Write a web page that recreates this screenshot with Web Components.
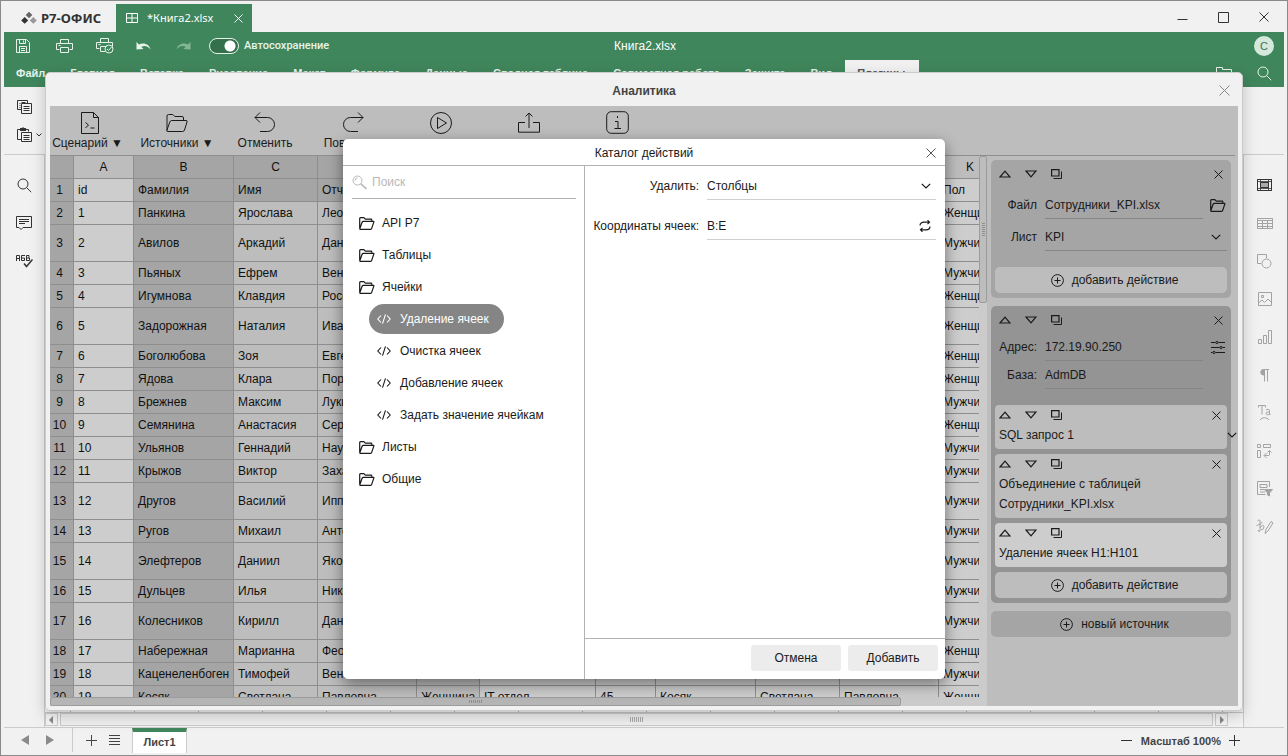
<!DOCTYPE html>
<html lang="ru">
<head>
<meta charset="utf-8">
<title>Р7-Офис — Книга2.xlsx</title>
<style>
html, body { margin: 0; height: 100%; overflow: hidden; }
body { font: 12px/16px "Liberation Sans", Arial, sans-serif; color: #1a1a1a; background: #f1f1f1; }
</style>
</head>
<body>
<office-window></office-window>
<script>
const RESET = `
*, *::before, *::after { box-sizing: border-box; }
button, input, select { font: inherit; color: inherit; background: none; border: 0; border-radius: 0; margin: 0; padding: 0; outline: 0; appearance: none; }
button { display: inline-flex; align-items: center; justify-content: center; }
`;
function define(name, css, html, setup) {
  customElements.define(name, class extends HTMLElement {
    connectedCallback() {
      if (this.shadowRoot) return;
      const root = this.attachShadow({ mode: 'open' });
      const body = typeof html === 'function' ? html(this) : html;
      root.innerHTML = `<style>${RESET}${css}</style>${body}`;
      if (setup) setup(root, this);
    }
  });
}

/* name: [width, height, markup] */
const ICONS = {
  logo: [16, 14, '<g stroke="none"><path fill="#666" d="M8 .8l3.300 3.200L8 7.200 4.700 4z"/><path fill="#333" d="M3.700 6l3.500 3.400-3.500 3.400L.2 9.400z"/><path fill="#999" d="M12.300 6l3.500 3.400-3.500 3.400-3.500-3.400z"/></g>'],
  grid: [12, 10, '<path d="M.5.5h11v9H.5zM6 .5v9M.5 5h11"/>'],
  x9: [9, 9, '<path d="M.5.5l8 8M8.500.5l-8 8"/>'],
  x10: [10, 10, '<path d="M.5.5l9 9M9.500.5l-9 9"/>'],
  x11: [11, 11, '<path d="M.5.5l10 10M10.500.5l-10 10"/>'],
  min: [11, 11, '<path d="M.5 7.500h10"/>'],
  dash: [11, 11, '<path d="M0 5.500h11"/>'],
  max: [11, 11, '<path d="M.5.5h10v10H.5z"/>'],
  save: [14, 14, '<path d="M.5.5h10l3 3v10H.5zM3.500.5v4h6v-4M7.500 1.500v2M3.500 13.500v-6h7v6M5 9.500h4M5 11.500h4"/>'],
  print: [17, 14, '<path d="M4.500 4.500v-4h8v4M3.500 10.500h-3v-6h16v6h-3M4.500 8.500h8v5h-8zM2.500 6.500h2"/>'],
  printok: [18, 16, '<path d="M4.500 4.500v-4h8v4M3.500 10.500h-3v-6h16v4M9 13.500H4.500v-5h6M2.500 6.500h2"/><circle cx="13" cy="11" r="4"/><path d="M11 11l1.500 1.500L15.500 9"/>'],
  undo: [15, 10, '<path stroke="none" fill="currentColor" d="M.5 1v7.500l7-.5-2.300-2.300C9 4 12 5 14.500 8.500 13.500 3.500 8 1 3 3.500z"/>'],
  redo: [15, 10, '<path stroke="none" fill="currentColor" d="M14.500 1v7.500l-7-.5 2.300-2.300C6 4 3 5 .5 8.500 1.500 3.500 7 1 12 3.500z"/>'],
  search: [15, 15, '<circle cx="6" cy="6" r="5"/><path d="M9.700 9.700l4.500 4.500"/>'],
  lens: [16, 15, '<circle cx="5.500" cy="5.500" r="4.500"/><path d="M3 5.500A2.500 2.500 0 0 1 5.500 3"/><path stroke-width="1.600" d="M8.800 8.800l5.700 5"/>'],
  folderline: [17, 13, '<path d="M.5 12.500V.5h6v2h9v10"/>'],
  copy: [15, 14, '<path d="M4.500 9.500h-4v-9h10v3M2.500 3.500h1M2.500 5.500h1M2.500 7.500h1M4.500 2.500h4M4.500 3.500h10v10h-10zM6.500 6.500h6M6.500 8.500h6M6.500 10.500h6"/>'],
  paste: [15, 15, '<path d="M4.500 12.500h-4v-10h3M9 2.500h2.500v2M4.500 5.500h10v9h-10zM6.500 8.500h6M6.500 10.500h6M6.500 12.500h6"/><path fill="currentColor" stroke="none" d="M3 1h2l1-1 1 1h2v3H3z"/>'],
  chev: [10, 6, '<path stroke-width="1.200" d="M.8.8L5 5 9.200.8"/>'],
  chevs: [6, 4, '<path d="M.5.5L3 3 5.500.5"/>'],
  comment: [16, 14, '<path d="M.5.5h15v11H7l-2 2-2-2H.5zM3 3.500h10M3 5.500h10M3 7.500h6"/>'],
  spell: [17, 14, '<path d="M.5 7V1.500h3V7M.5 4.500h3M5.500 6.500V1.500H9M5.500 4h3v2.500h-3M10.500 1.500h2.500V4h-2.500v2.500h3V4M10.500 1.500v5"/><path stroke-width="1.500" d="M8 9.500l2.500 3 6-7"/>'],
  cells: [15, 12, '<path d="M.5.5h14v11H.5zM3.500.5v11M11.500.5v11M.5 2.500h14M.5 9.500h14" stroke-width=".8"/><path d="M.5.5h14v11H.5z"/><path fill="#aaa" d="M3.500 3.500h8v5h-8z"/>'],
  table: [16, 11, '<path d="M.5.5h15v10H.5zM.5 2.500h15M.5 5.500h15M.5 8.500h15M5.500 2.500v8M10.500 2.500v8"/>'],
  shape: [15, 15, '<path d="M4 9.500H.5v-9h9V4"/><circle cx="9.500" cy="9.500" r="4.500"/>'],
  image: [14, 14, '<path d="M.5.5h13v13H.5zM.5 11L4 8l2.500 2.500L10 7l3.500 3.500M3.500 3.500h2v2h-2z"/>'],
  chart: [14, 14, '<path d="M.5 9.500h3v4h-3zM5.500 5.500h3v8h-3zM10.500.5h3v13h-3z"/>'],
  para: [9, 13, '<path d="M4.500 0v12.500M7.500 0v12.500M4 .5h5"/><path fill="currentColor" d="M4.500.5h-1a2.700 2.700 0 0 0 0 5.500h1z"/>'],
  art: [13, 16, '<path d="M.5 2.500v-2h7v2M4 .5v9M8 5c1-1 3.500-1 3.500.5v4c-1.500.5-3.500.3-3.500-1.200S10 7 11.500 7M11.500 9l1 .5M2 15c2-3 7-3 9 0"/>'],
  pivot: [15, 14, '<path d="M.5.5h3v3h-3zM6.500.5h7v3h-7zM.5 6.500h3v7h-3zM7.500 11.500h4c1 0 1-.5 1-1V7M9.500 9l-2.500 2.500L9.500 14M10.500 8.500l2-2 2 2"/>'],
  filter: [16, 16, '<path d="M12.500 6V.5H.5v13h8M3 3.500h7v3H3zM3 8.500h4M3 11h5"/><path fill="currentColor" d="M7.500 8.500h8L12.500 12v3l-2-1v-2z"/>'],
  sign: [18, 16, '<path d="M1.500 2q3-3 2.500 2v8q-1 2-2-1M.5 6.500q4-1 6-3.500M4 9q3-5 4-1-.5 3-3 3M9 14.500l1-4 5-8 2 1.500-5 8z"/>'],
  script: [18, 22, '<path d="M.5.5h12l5 5v16H.5zM12.500.5v5h5M4.500 10.500L7.500 13l-3 3M9.500 16h4"/>'],
  open: [22, 18, '<path d="M1 16.500V2q0-1.500 1.500-1.500h4.300l2 2H16q1.500 0 1.500 1.500v2.500M.8 16.500l3-8.500q.5-1.500 2-1.500H20q1.500 0 1 1.500l-2.500 8q-.4 1.500-2 1.500H1.800q-1.300 0-1-1z"/>'],
  back: [22, 21, '<path d="M6 .5L1 5.500l5 5M1 5.500h12.500a7 7 0 0 1 0 14H6"/>'],
  forward: [22, 21, '<path d="M16 .5l5 5-5 5M21 5.500H8.500a7 7 0 0 0 0 14H16"/>'],
  play: [24, 24, '<circle cx="12" cy="12" r="10.500"/><path d="M8.500 6.500l9 5.500-9 5.500z"/>'],
  share: [22, 21, '<path d="M11 16V1M7.500 4.500L11 1l3.500 3.500M7 10.500H.5v9.700h21v-9.700H15"/>'],
  info: [23, 23, '<rect x=".7" y=".7" width="21.600" height="21.600" rx="4.500"/><path d="M11.500 5v2M9 10.500h3v7M8.500 17.500h6.500"/>'],
  up: [12, 8, '<path stroke-width="1.200" d="M1 7l5-5.800L11 7z"/>'],
  down: [12, 8, '<path stroke-width="1.200" d="M1 1l5 5.800L11 1z"/>'],
  dup: [11, 10, '<path stroke-width="1.200" d="M.6.6h7.400v6.400H.6z"/><path d="M10.500 2.500v7H2.500"/>'],
  folder: [16, 13, '<path stroke-width="1.200" d="M.7 11.500V1.500q0-.8.8-.8h3.300l1.500 1.500H12q.8 0 .8.8v1.300M.8 11.800l2.300-6.600q.3-.9 1.200-.9h10.200q.6 0 .3.800l-2.200 6.500q-.2.700-1 .7H1.300q-.7 0-.5-.5z"/>'],
  code: [14, 10, '<path stroke-width="1.100" d="M4 1.500L.8 5 4 8.500M10 1.500L13.200 5 10 8.500M8.500.3l-3 9.400"/>'],
  plus: [13, 13, '<circle cx="6.500" cy="6.500" r="5.900"/><path d="M6.500 3.500v6M3.500 6.500h6"/>'],
  cross: [11, 11, '<path d="M5.500 0v11M0 5.500h11"/>'],
  list: [11, 11, '<path d="M0 .5h11M0 3.500h11M0 6.500h11M0 9.500h11"/>'],
  sliders: [14, 13, '<path stroke-width="1.100" d="M0 1.500h4.500M7.500 1.500H14M0 6.500h8.500M11.500 6.500H14M0 11.500h1.500M4.500 11.500H14"/><circle cx="6" cy="1.500" r="1.100"/><circle cx="10" cy="6.500" r="1.100"/><circle cx="3" cy="11.500" r="1.100"/>'],
  sync: [12, 12, '<path stroke-width="1.200" d="M1 5.500C1 3 3 2.200 5 2.200h5.500M8.500.2l2 2-2 2M11 6.500c0 2.500-2 3.300-4 3.300H1.500M3.500 7.800l-2 2 2 2"/>'],
  tl: [8, 10, '<path stroke="none" fill="currentColor" d="M8 0v10L0 5z"/>'],
  tr: [8, 10, '<path stroke="none" fill="currentColor" d="M0 0v10l8-5z"/>'],
  tls: [5, 8, '<path stroke="none" fill="currentColor" d="M4 0v8L0 4z"/>'],
  trs: [5, 8, '<path stroke="none" fill="currentColor" d="M1 0v8l4-4z"/>'],
};
const icon = n => `<ui-icon name="${n}"></ui-icon>`;
define('ui-icon', `:host { display: inline-flex; flex: none; } svg { display: block; fill: none; stroke: currentColor; }`,
  el => { const [w, h, m] = ICONS[el.getAttribute('name')]; return `<svg width="${w}" height="${h}" viewBox="0 0 ${w} ${h}" aria-hidden="true">${m}</svg>`; });

define('title-bar', `
:host { display: flex; height: 31px; padding: 3px 13px 0 20px; color: #333; }
.brand { display: flex; align-items: center; gap: 4px; width: 95px; font: bold 13px/20px "Noto Sans", sans-serif; }
.tab { display: flex; align-items: center; width: 136px; padding: 0 9px 0 10px; background: #40865c; color: #fff; font: 11px/16px "Noto Sans", sans-serif; }
.tab span { flex: 1; padding-left: 9px; }
.win { margin-left: auto; display: flex; gap: 30px; padding: 0 5px 2px 0; }`,
`<div class="brand">${icon('logo')}<span>Р7-ОФИС</span></div>
<div class="tab">${icon('grid')}<span>*Книга2.xlsx</span><button aria-label="Закрыть вкладку">${icon('x9')}</button></div>
<div class="win"><button aria-label="Свернуть">${icon('min')}</button><button aria-label="Развернуть">${icon('max')}</button><button aria-label="Закрыть">${icon('x10')}</button></div>`);

define('app-header', `
:host { display: grid; grid-template-rows: 28px 27px; height: 55px; margin: 0 3px; background: #40865c; color: #e6f3ea; }
.quick { display: grid; grid-template-columns: 1fr auto 1fr; align-items: center; padding: 0 10px 0 12px; }
.left { display: flex; align-items: center; }
.left button { width: 40px; justify-content: flex-start; }
.left .dim { color: #83b596; width: 33px; }
label { display: flex; align-items: center; gap: 5px; font: 500 11px/14px Roboto, "Liberation Sans", sans-serif; }
label input { width: 30px; height: 16px; border: 1px solid #e6f3ea; border-radius: 8px; background: radial-gradient(circle at 20px 7px, #fff 5px, #33704b 6px); }
.user { justify-self: end; width: 20px; height: 20px; border-radius: 10px; background: #d5e8dc; color: #40705a; font-size: 11px; }
nav { display: flex; font: bold 11px/14px "Liberation Sans", Arial, sans-serif; }
nav a { padding: 6px 13px 6px 12px; color: inherit; text-decoration: none; }
nav a.on { background: #f1f1f1; color: #555; }
.tools { margin-left: auto; display: flex; align-items: center; gap: 24px; padding-right: 12px; }
.doc { color: #fff; }`,
`<div class="quick"><div class="left">
<button aria-label="Сохранить">${icon('save')}</button><button aria-label="Печать">${icon('print')}</button><button aria-label="Быстрая печать">${icon('printok')}</button><button aria-label="Отменить">${icon('undo')}</button><button class="dim" aria-label="Повторить">${icon('redo')}</button>
<label><input type="checkbox" checked>Автосохранение</label></div>
<span class="doc">Книга2.xlsx</span><button class="user">C</button></div>
<nav>${['Файл','Главная','Вставка','Рисование','Макет','Формула','Данные','Сводная таблица','Совместная работа','Защита','Вид'].map(t => `<a href="#">${t}</a>`).join('')}<a href="#" class="on">Плагины</a>
<div class="tools"><button aria-label="Открыть расположение">${icon('folderline')}</button><button aria-label="Поиск">${icon('search')}</button></div></nav>`);

define('side-rail', `
:host { display: flex; flex-direction: column; width: 41px; color: #333; }
.top { display: flex; flex-direction: column; height: 68px; border-bottom: 1px solid #cbcbcb; align-items: flex-start; padding: 13px 0 0 13px; gap: 13px; }
.top div { display: flex; align-items: center; gap: 4px; }
.list { flex: 1; display: flex; flex-direction: column; align-items: center; padding-top: 11px; }
.list button { height: 38px; width: 38px; }
:host([side=left]) .list { border-right: 1px solid #cbcbcb; }
:host([side=right]) .list { border-left: 1px solid #cbcbcb; color: #a3a3a3; padding-left: 1px; }
:host([side=right]) .list button:first-child { color: #333; }`,
el => el.getAttribute('side') === 'left'
 ? `<div class="top"><button aria-label="Копировать">${icon('copy')}</button><div><button aria-label="Вставить">${icon('paste')}</button>${icon('chevs')}</div></div><div class="list">${['search','comment','spell'].map(n => `<button aria-label="${n}">${icon(n)}</button>`).join('')}</div>`
 : `<div class="top"></div><div class="list">${['cells','table','shape','image','chart','para','art','pivot','filter','sign'].map(n => `<button aria-label="${n}">${icon(n)}</button>`).join('')}</div>`);

define('work-area', `
:host { flex: 1; display: flex; flex-direction: column; justify-content: flex-end; }
.ticks { height: 2px; background: repeating-linear-gradient(90deg, transparent 0 25px, #aaa 25px 26px, transparent 26px 64px); border-bottom: 1px solid #c5c5c5; }
.bar { display: flex; gap: 2px; height: 14px; padding: 0 15px 1px 0; background: #f4f4f4; color: #888; }
.bar button { width: 13px; border: 1px solid #cbcbcb; }
.track { flex: 1; display: grid; place-items: center; border: 1px solid #cbcbcb; background: #f0f0f0; }
.grip { width: 13px; height: 5px; background: repeating-linear-gradient(90deg, #aaa 0 1px, transparent 1px 2px); }`,
`<div class="ticks"></div><div class="bar"><button aria-label="Влево">${icon('tls')}</button><div class="track"><i class="grip"></i></div><button aria-label="Вправо">${icon('trs')}</button></div>`);

define('status-bar', `
:host { display: flex; align-items: stretch; height: 28px; margin: 0 3px; border-top: 1px solid #cbcbcb; font: bold 11px/14px "Liberation Sans", Arial, sans-serif; color: #444; }
.nav { display: flex; align-items: center; gap: 17px; width: 69px; padding: 0 0 0 17px; margin-bottom: 3px; border-right: 1px solid #cbcbcb; color: #8a8a8a; }
.ops { display: flex; gap: 12px; align-items: center; padding: 0 12px 2px 13px; }
.sheet { width: 55px; height: 25px; background: #fff; border: 1px solid #cbcbcb; border-top: 4px solid #40865c; border-bottom: 0; padding-bottom: 2px; }
.zoom { margin-left: auto; display: flex; align-items: center; gap: 8px; padding: 0 44px 2px 0; }
.zoom button:first-child { margin-right: 1px; }
.zoom ui-icon { color: #333; }`,
`<div class="nav"><button aria-label="Предыдущий лист">${icon('tl')}</button><button aria-label="Следующий лист">${icon('tr')}</button></div>
<div class="ops"><button aria-label="Добавить лист">${icon('cross')}</button><button aria-label="Список листов">${icon('list')}</button></div>
<button class="sheet">Лист1</button>
<div class="zoom"><button aria-label="Уменьшить">${icon('dash')}</button><span>Масштаб 100%</span><button aria-label="Увеличить">${icon('cross')}</button></div>`);

const ROWS = [
 ['id','Фамилия','Имя','Отчество','Пол'],
 ['1','Панкина','Ярослава','Леонидовна','Женщина'],
 ['2','Авилов','Аркадий','Данилович','Мужчина',1],
 ['3','Пьяных','Ефрем','Венедиктыч','Мужчина'],
 ['4','Игумнова','Клавдия','Росселевна','Женщина'],
 ['5','Задорожная','Наталия','Ивановна','Женщина',1],
 ['6','Боголюбова','Зоя','Евгеньевна','Женщина'],
 ['7','Ядова','Клара','Порфирьевна','Женщина'],
 ['8','Брежнев','Максим','Лукич','Мужчина'],
 ['9','Семянина','Анастасия','Сергеевна','Женщина'],
 ['10','Ульянов','Геннадий','Наумович','Мужчина'],
 ['11','Крыжов','Виктор','Захарович','Мужчина'],
 ['12','Другов','Василий','Ипполитович','Мужчина',1],
 ['13','Ругов','Михаил','Антонович','Мужчина'],
 ['14','Элефтеров','Даниил','Яковлевич','Мужчина',1],
 ['15','Дульцев','Илья','Никитич','Мужчина'],
 ['16','Колесников','Кирилл','Данилович','Мужчина',1],
 ['17','Набережная','Марианна','Феоктистовна','Женщина'],
 ['18','Каценеленбоген','Тимофей','Вениаминович','Мужчина'],
 ['19','Косяк','Светлана','Павловна','Женщина'],
];
const TAIL = { 19: ['Женщина','IT отдел','45','Косяк','Светлана','Павловна'] };
define('data-sheet', `
:host { display: grid; grid-template: minmax(0, 1fr) 9px / minmax(0, 1fr) 8px; background: #cbcbcb; color: #111; }
.view { overflow: hidden; }
table { table-layout: fixed; width: 952px; border-spacing: 0; }
th, td { height: 23px; padding: 0 0 0 4px; border: solid #8e8e8e; border-width: 0 1px 1px 0; text-align: left; white-space: nowrap; overflow: hidden; font-weight: normal; line-height: 16px; background: #cdcdcd; }
.tall td, .tall th { height: 37px; }
thead th { padding: 0; text-align: center; background: #bdbdbd; }
tbody th { padding: 0 4px 0 0; text-align: center; background: #a5a5a5; }
.s { background: #bdbdbd; }
.b, thead .s, tbody .first .s { background: #a5a5a5; }
.thumb { height: 147px; display: grid; place-items: center; border: 1px solid #9c9c9c; border-radius: 2px; background: #bdbdbd; }
.thumb i { width: 3px; height: 13px; background: repeating-linear-gradient(#8e8e8e 0 1px, transparent 1px 2px); }
.hthumb { width: 851px; display: grid; place-items: center; border: 1px solid #9c9c9c; border-radius: 2px; background: #b5b5b5; max-width: 92%; }
.hthumb i { width: 13px; height: 3px; background: repeating-linear-gradient(90deg, #8e8e8e 0 1px, transparent 1px 2px); }`,
() => {
  const cls = ['', 'b', 's', 's', 's', '', '', '', '', '', ''];
  const head = 'ABCDEFGHIJK'.split('').map((c, i) => `<th scope="col" class="${cls[i]}">${c}</th>`).join('');
  const body = ROWS.map((r, i) => {
    const cells = [...r.slice(0, 4), ...(TAIL[i] || ['', '', '', '', '', '']), r[4]];
    return `<tr class="${r[5] ? 'tall' : ''} ${i ? '' : 'first'}"><th scope="row">${i + 1}</th>${cells.map((c, j) => `<td class="${cls[j]}">${c}</td>`).join('')}</tr>`;
  }).join('');
  const cols = [24, 60, 100, 84, 99, 63, 116, 60, 100, 84, 99, 63].map(w => `<col style="width:${w}px">`).join('');
  return `<div class="view"><table><colgroup>${cols}</colgroup><thead><tr><th class="b"></th>${head}</tr></thead><tbody>${body}</tbody></table></div><div><div class="thumb"><i></i></div></div><div class="hthumb"><i></i></div>`;
});

const TOOLROW = `<div class="tools"><button aria-label="Выше">${icon('up')}</button><button aria-label="Ниже">${icon('down')}</button><button aria-label="Дублировать">${icon('dup')}</button><button class="close" aria-label="Удалить">${icon('x9')}</button></div>`;
const TOOLCSS = `.tools { display: flex; align-items: center; gap: 14px; height: 20px; } .tools .close { margin-left: auto; }`;

define('source-card', `
:host { display: flex; flex-direction: column; gap: 5px; padding: 4px 4px 5px; border-radius: 5px; background: var(--card, #a5a5a5); }
${TOOLCSS} .tools { padding: 0 4px; }`, `${TOOLROW}<slot></slot>`);

define('card-field', `
:host { display: flex; align-items: center; height: var(--h, 28px); }
label { width: 42px; text-align: right; margin-right: 8px; }
.box { flex: 1; display: flex; align-items: center; justify-content: space-between; height: 28px; border-bottom: 1px solid #858585; }
:host([action]) .box { margin-right: 7px; }
input, select { flex: 1; min-width: 0; height: 26px; }
button, .ph { width: 16px; margin-right: 1px; }
.chev { margin-right: 6px; display: flex; }`,
el => {
  const k = el.getAttribute('kind'), a = el.getAttribute('action'), v = el.getAttribute('value'), l = el.getAttribute('label');
  const field = k === 'select' ? `<select id="f"><option>${v}</option></select><span class="chev">${icon('chev')}</span>` : `<input id="f" type="text" value="${v}">`;
  const act = a === null ? '' : a ? `<button aria-label="Изменить">${icon(a)}</button>` : '<span class="ph"></span>';
  return `<label for="f">${l}</label><div class="box">${field}</div>${act}`;
});

define('action-item', `
:host { display: block; padding: 0 6px 4px 4px; border-radius: 4px; background: var(--item, #bdbdbd); line-height: 20px; }
${TOOLCSS}`, `${TOOLROW}<slot></slot>`);

define('add-button', `
:host { display: block; }
button { width: 100%; height: 26px; padding-left: 7px; gap: 8px; border-radius: 5px; background: var(--fill, #bdbdbd); }`,
`<button>${icon('plus')}<slot></slot></button>`);

define('source-panel', `
:host { display: flex; flex-direction: column; gap: 8px; width: 251px; padding: 4px 7px 0 4px; background: #bdbdbd; position: relative; }
.two { --card: #949494; }
.fields { display: flex; flex-direction: column; }
.one card-field { --h: 32px; }
.one add-button { margin-top: 9px; }
.two .fields { margin: -2px 0 11px; }
.last { --item: #cdcdcd; }
.new { --fill: #a5a5a5; }
.more { position: absolute; left: 240px; top: 276px; }`,
`<source-card class="one"><div class="fields"><card-field label="Файл" value="Сотрудники_KPI.xlsx" action="folder"></card-field><card-field label="Лист" value="KPI" kind="select"></card-field></div><add-button>добавить действие</add-button></source-card>
<source-card class="two"><div class="fields"><card-field label="Адрес:" value="172.19.90.250" action="sliders"></card-field><card-field label="База:" value="AdmDB" action=""></card-field></div>
<action-item>SQL запрос 1</action-item><action-item>Объединение с таблицей<br>Сотрудники_KPI.xlsx</action-item><action-item class="last">Удаление ячеек H1:H101</action-item><add-button>добавить действие</add-button></source-card>
<add-button class="new">новый источник</add-button><button class="more" aria-label="Ещё">${icon('chev')}</button>`);

define('catalog-entry', `
:host { display: block; height: 32px; padding: 1px 0; }
button { height: 30px; gap: 7px; padding: 0 15px 0 8px; border-radius: 15px; }
:host([leaf]) { padding-left: 18px; }
:host([leaf]) button { gap: 9px; }
:host([selected]) button { background: #858585; color: #fff; }`,
el => `<button>${icon(el.hasAttribute('leaf') ? 'code' : 'folder')}<slot></slot></button>`);

define('action-catalog', `
:host { display: flex; flex-direction: column; width: 602px; height: 540px; max-width: 100%; max-height: 100%; border-radius: 5px; background: #fff; box-shadow: 0 5px 15px rgba(0,0,0,.45); overflow: hidden; }
header { display: grid; grid-template-columns: 28px 1fr 28px; height: 27px; padding-top: 2px; align-items: center; text-align: center; border-bottom: 1px solid #b2b2b2; }
header span { grid-column: 2; } header button { color: #555; height: 24px; }
main { flex: 1; display: flex; min-height: 0; }
.left { width: 242px; border-right: 1px solid #b2b2b2; padding: 0 8px; }
.search { display: flex; align-items: center; gap: 4px; height: 33px; border-bottom: 1px solid #b2b2b2; color: #b8b8b8; margin: 0 0 8px 1px; }
.search input { flex: 1; min-width: 0; height: 24px; } .search input::placeholder { color: #b8b8b8; opacity: 1; }
.right { flex: 1; display: flex; flex-direction: column; }
.form { flex: 1; padding: 0 9px 0 8px; }
.row { display: flex; align-items: center; height: 40px; }
.row label { width: 106px; margin-right: 8px; text-align: right; white-space: nowrap; }
.box { flex: 1; display: flex; align-items: center; height: 28px; border-bottom: 1px solid #cfcfcf; padding-right: 5px; }
.box input, .box select { flex: 1; min-width: 0; height: 26px; }
footer { display: flex; justify-content: flex-end; gap: 7px; height: 41px; padding: 6px 7px; border-top: 1px solid #b2b2b2; }
footer button { width: 90px; height: 26px; border-radius: 3px; background: #ececec; }`,
`<header><span>Каталог действий</span><button aria-label="Закрыть">${icon('x10')}</button></header>
<main><div class="left"><label class="search">${icon('lens')}<input type="text" placeholder="Поиск" aria-label="Поиск"></label>
<catalog-entry>API P7</catalog-entry><catalog-entry>Таблицы</catalog-entry><catalog-entry>Ячейки</catalog-entry>
<catalog-entry leaf selected>Удаление ячеек</catalog-entry><catalog-entry leaf>Очистка ячеек</catalog-entry><catalog-entry leaf>Добавление ячеек</catalog-entry><catalog-entry leaf>Задать значение ячейкам</catalog-entry>
<catalog-entry>Листы</catalog-entry><catalog-entry>Общие</catalog-entry></div>
<div class="right"><div class="form"><div class="row"><label for="kind">Удалить:</label><div class="box"><select id="kind"><option>Столбцы</option></select>${icon('chev')}</div></div>
<div class="row"><label for="range">Координаты ячеек:</label><div class="box"><input id="range" type="text" value="B:E"><button aria-label="Обновить">${icon('sync')}</button></div></div></div>
<footer><button>Отмена</button><button>Добавить</button></footer></div></main>`);

define('analytics-dialog', `
:host { position: absolute; top: 71px; right: 44px; bottom: 44px; left: 44px; display: flex; flex-direction: column; padding: 0 4px 4px; border: 1px solid #cbcbcb; border-radius: 5px; background: #f1f1f1; box-shadow: 0 5px 15px rgba(0,0,0,.2); }
header { display: grid; grid-template-columns: 30px 1fr 30px; height: 33px; padding-top: 2px; align-items: center; text-align: center; font: bold 12px/16px "Liberation Sans", Arial, sans-serif; color: #444; }
header span { grid-column: 2; } header button { color: #888; padding-left: 2px; }
.body { flex: 1; display: flex; flex-direction: column; min-height: 0; background: #bdbdbd; }
.bar { display: flex; height: 50px; margin-right: 3px; padding-top: 2px; border-bottom: 1px solid #8e8e8e; line-height: 12px; }
.bar button { flex-direction: column; justify-content: flex-start; width: 88px; }
.bar ui-icon { height: 29px; align-items: center; }
.bar button:first-child { width: 83px; padding-right: 8px; }
.bar button:first-child ui-icon { padding-left: 4px; }
.split { flex: 1; display: flex; min-height: 0; }
data-sheet { flex: 1; min-width: 0; }
.modal { position: absolute; inset: 33px 0 0; display: grid; place-items: center; padding-top: 2px; }`,
`<header><span>Аналитика</span><button aria-label="Закрыть">${icon('x11')}</button></header>
<div class="body"><div class="bar">
${[['script','Сценарий ▼'],['open','Источники ▼'],['back','Отменить'],['forward','Повторить'],['play',''],['share',''],['info','']].map(([n, t]) => `<button aria-label="${t || n}">${icon(n)}<span>${t}</span></button>`).join('')}</div>
<div class="split"><data-sheet></data-sheet><source-panel></source-panel></div></div>
<div class="modal"><action-catalog></action-catalog></div>`);

define('office-window', `
:host { position: relative; display: flex; flex-direction: column; height: 100vh; border: 1px solid #8a8a8a; background: #f1f1f1; overflow: hidden; box-sizing: border-box; }
.mid { flex: 1; display: flex; min-height: 0; padding: 0 3px; }`,
`<title-bar></title-bar><app-header></app-header><div class="mid"><side-rail side="left"></side-rail><work-area></work-area><side-rail side="right"></side-rail></div><status-bar></status-bar><analytics-dialog></analytics-dialog>`);
</script>
</body>
</html>
